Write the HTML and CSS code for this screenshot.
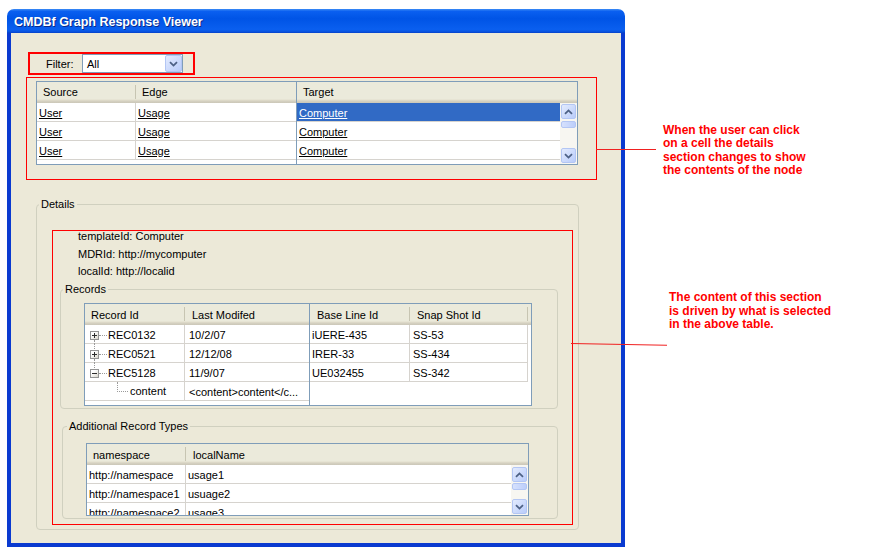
FILE: index.html
```html
<!DOCTYPE html>
<html>
<head>
<meta charset="utf-8">
<title>CMDBf Graph Response Viewer</title>
<link rel="stylesheet" href="styles.css">
</head>
<body>
<div class="window">
  <div class="titlebar"><span class="title">CMDBf Graph Response Viewer</span></div>
  <div class="client">
    <div class="filter-box">
      <span class="filter-label">Filter:</span>
      <div class="combo">
        <span class="combo-text">All</span>
        <span class="combo-btn"><svg width="9" height="6" viewBox="0 0 9 6"><polyline points="1,1.2 4.5,4.6 8,1.2" fill="none" stroke="#4D6185" stroke-width="1.8"/></svg></span>
      </div>
    </div>

    <div class="table-box">
      <div class="grid grid-main">
        <div class="pane pane-left main-left">
          <div class="hdr"><div class="h col-src">Source</div><div class="h col-edge last">Edge</div></div>
          <div class="row"><div class="c col-src"><a>User</a></div><div class="c col-edge last"><a>Usage</a></div></div>
          <div class="row"><div class="c col-src"><a>User</a></div><div class="c col-edge last"><a>Usage</a></div></div>
          <div class="row"><div class="c col-src"><a>User</a></div><div class="c col-edge last"><a>Usage</a></div></div>
        </div>
        <div class="pane pane-right main-right">
          <div class="hdr"><div class="h fill last pad-target">Target</div></div>
          <div class="body">
            <div class="rows">
              <div class="row sel"><div class="c fill last"><a>Computer</a></div></div>
              <div class="row"><div class="c fill last"><a>Computer</a></div></div>
              <div class="row"><div class="c fill last"><a>Computer</a></div></div>
            </div>
            <div class="sb sb-main">
              <div class="sb-btn"><svg width="9" height="6" viewBox="0 0 9 6"><polyline points="1,4.8 4.5,1.4 8,4.8" fill="none" stroke="#4D6185" stroke-width="1.8"/></svg></div>
              <div class="sb-thumb"></div>
              <div class="sb-fill"></div>
              <div class="sb-btn"><svg width="9" height="6" viewBox="0 0 9 6"><polyline points="1,1.2 4.5,4.6 8,1.2" fill="none" stroke="#4D6185" stroke-width="1.8"/></svg></div>
            </div>
          </div>
        </div>
      </div>
    </div>

    <div class="group details">
      <div class="legend">Details</div>
      <div class="detail-box">
        <div class="fields">
          <div>templateId: Computer</div>
          <div>MDRId: http://mycomputer</div>
          <div>localId: http://localid</div>
        </div>

        <div class="group records">
          <div class="legend">Records</div>
          <div class="grid grid-records sub-grid">
            <div class="pane pane-left rec-left">
              <div class="hdr"><div class="h col-rid">Record Id</div><div class="h col-mod last pad7">Last Modifed</div></div>
              <div class="row">
                <div class="c col-rid tree down"><span class="tbox plus"></span><span class="tdot"></span><span class="ttext">REC0132</span></div>
                <div class="c col-mod last pad4">10/2/07</div>
              </div>
              <div class="row">
                <div class="c col-rid tree up down"><span class="tbox plus"></span><span class="tdot"></span><span class="ttext">REC0521</span></div>
                <div class="c col-mod last pad4">12/12/08</div>
              </div>
              <div class="row">
                <div class="c col-rid tree up"><span class="tbox"></span><span class="tdot"></span><span class="ttext">REC5128</span></div>
                <div class="c col-mod last pad4">11/9/07</div>
              </div>
              <div class="row">
                <div class="c col-rid tree child"><span class="tbranch"></span><span class="ttext">content</span></div>
                <div class="c col-mod last pad4">&lt;content&gt;content&lt;/c...</div>
              </div>
            </div>
            <div class="pane pane-right rec-right">
              <div class="hdr"><div class="h col-base pad7">Base Line Id</div><div class="h col-snap pad7">Snap Shot Id</div><div class="h fill last"></div></div>
              <div class="row short"><div class="c col-base">iUERE-435</div><div class="c col-snap pad3">SS-53</div></div>
              <div class="row short"><div class="c col-base">IRER-33</div><div class="c col-snap pad3">SS-434</div></div>
              <div class="row short"><div class="c col-base">UE032455</div><div class="c col-snap pad3">SS-342</div></div>
            </div>
          </div>
        </div>

        <div class="group additional">
          <div class="legend">Additional Record Types</div>
          <div class="grid grid-add sub-grid">
            <div class="pane add-pane">
              <div class="hdr"><div class="h col-ns">namespace</div><div class="h fill last pad7">localName</div></div>
              <div class="body add-body">
                <div class="rows">
                  <div class="row"><div class="c col-ns">http://namespace</div><div class="c fill last">usage1</div></div>
                  <div class="row"><div class="c col-ns">http://namespace1</div><div class="c fill last">usuage2</div></div>
                  <div class="row"><div class="c col-ns">http://namespace2</div><div class="c fill last">usage3</div></div>
                </div>
                <div class="sb sb-add">
                  <div class="sb-btn"><svg width="9" height="6" viewBox="0 0 9 6"><polyline points="1,4.8 4.5,1.4 8,4.8" fill="none" stroke="#4D6185" stroke-width="1.8"/></svg></div>
                  <div class="sb-thumb"></div>
                  <div class="sb-fill"></div>
                  <div class="sb-btn"><svg width="9" height="6" viewBox="0 0 9 6"><polyline points="1,1.2 4.5,4.6 8,1.2" fill="none" stroke="#4D6185" stroke-width="1.8"/></svg></div>
                </div>
              </div>
            </div>
          </div>
        </div>
      </div>
    </div>
  </div>
</div>

<div class="note-line line-1"></div>
<div class="note note-1">When the user can click<br>on a cell the details<br>section changes to show<br>the contents of the node</div>
<div class="note-line line-2"></div>
<div class="note note-2">The content of this section<br>is driven by what is selected<br>in the above table.</div>
</body>
</html>
```

FILE: styles.css
```css
* { box-sizing: border-box; }
html, body { margin: 0; padding: 0; }
body {
  width: 885px;
  height: 558px;
  overflow: hidden;
  position: relative;
  background: #ffffff;
  font-family: "Liberation Sans", Arial, sans-serif;
  font-size: 11px;
  color: #000;
}
a { color: inherit; text-decoration: underline; }

/* window frame */
.window { margin: 9px 0 0 7px; width: 618px; }
.titlebar {
  height: 24px;
  border-radius: 7px 7px 0 0;
  background: linear-gradient(180deg, #3d8cf5 0, #0a5ff0 10%, #0054e6 40%, #0a5fef 85%, #0855e3 93%, #0541c9 100%);
  display: flex;
  align-items: center;
  padding: 1px 0 0 7px;
}
.title {
  color: #fff;
  font-weight: bold;
  font-size: 12.5px;
  text-shadow: 1px 1px 0 #0a2a8a;
}
.client {
  height: 514px;
  background: #ECE9D8;
  border: 4px solid #0a3ad0;
  border-top: 0;
  padding-top: 19px;
}

/* filter */
.filter-box {
  margin-left: 17px;
  width: 167px;
  height: 23px;
  border: 2px solid #ff0000;
  display: flex;
  align-items: center;
  padding-left: 16px;
}
.filter-label { display: inline-block; width: 36px; }
.combo {
  width: 101px;
  height: 19px;
  border: 1px solid #7F9DB9;
  background: #fff;
  display: flex;
  align-items: center;
}
.combo-text { padding-left: 4px; flex: 1; }
.combo-btn {
  width: 17px;
  height: 17px;
  border: 1px solid #B3C6F4;
  border-radius: 2px;
  background: linear-gradient(135deg, #E3EBFE, #B9CCFA);
  display: flex;
  align-items: center;
  justify-content: center;
}

/* table box */
.table-box {
  margin: 2px 0 0 15px;
  width: 571px;
  height: 103px;
  border: 1px solid #ff0000;
  padding: 3px 0 0 9px;
}

/* generic grid */
.grid {
  border: 1px solid #7F9DB9;
  background: #fff;
  display: flex;
  overflow: hidden;
}
.pane { display: flex; flex-direction: column; }
.pane-left { border-right: 1px solid #7F9DB9; }
.pane-right, .add-pane { flex: 1; }
.hdr {
  display: flex;
  height: 21px;
  flex: none;
  background: linear-gradient(180deg, #EBEADB 0, #EBEADB 17px, #E2DECD 18px, #D6D2C2 19px, #CBC7B8 21px);
}
.h {
  position: relative;
  height: 21px;
  line-height: 21px;
  padding-left: 6px;
  white-space: nowrap;
}
.h::after {
  content: "";
  position: absolute;
  right: 0;
  top: 3px;
  bottom: 4px;
  width: 1px;
  background: #C7C5B2;
}
.h.last::after { display: none; }
.row {
  display: flex;
  height: 19px;
  flex: none;
  border-bottom: 1px solid #D6D3CE;
}
.c {
  height: 18px;
  line-height: 20px;
  padding-left: 2px;
  white-space: nowrap;
  overflow: hidden;
  border-right: 1px solid #D6D3CE;
}
.sub-grid .h { line-height: 22px; }
.sub-grid .c { line-height: 21px; }
.c.last { border-right: 0; }
.fill { flex: 1; }
.pad3 { padding-left: 3px; }
.pad4 { padding-left: 4px; }
.pad7 { padding-left: 7px; }
.pad-target { padding-left: 6px; }
.row.sel .c { background: #316AC5; color: #fff; }

.body { display: flex; flex: 1; }
.rows { flex: 1; display: flex; flex-direction: column; overflow: hidden; }

/* scrollbar */
.sb {
  width: 17px;
  flex: none;
  background: #F7F6F1;
  display: flex;
  flex-direction: column;
  padding: 1px 0 1px 1px;
}
.sb-btn {
  width: 15px;
  height: 15px;
  flex: none;
  border: 1px solid #B3C6F4;
  border-radius: 2px;
  background: linear-gradient(135deg, #E3EBFE, #B9CCFA);
  display: flex;
  align-items: center;
  justify-content: center;
}
.sb-thumb {
  width: 15px;
  height: 7px;
  margin-top: 2px;
  flex: none;
  border: 1px solid #B3C6F4;
  border-radius: 2px;
  background: linear-gradient(90deg, #D6E1FD, #BCCEFA);
}
.sb-fill { flex: 1; }

/* main table */
.grid-main { width: 542px; height: 84px; }
.main-left { width: 260px; }
.col-src { width: 99px; }
.col-edge { width: 160px; }

/* group boxes */
.group {
  border: 1px solid #D0D0BF;
  border-radius: 4px;
}
.legend {
  width: max-content;
  margin-top: -7px;
  margin-left: 2px;
  padding: 0 2px;
  line-height: 13px;
  height: 13px;
  background: #ECE9D8;
}
.details {
  margin: 24px 0 0 25px;
  width: 543px;
  padding-bottom: 4px;
}
.detail-box {
  margin: 19px 0 0 15px;
  width: 521px;
  height: 295px;
  border: 1px solid #ff0000;
}
.fields {
  margin-top: -3px;
  padding-left: 25px;
  line-height: 17.5px;
  height: 51px;
}

.records {
  margin: 10px 0 0 7px;
  width: 498px;
  height: 120px;
}
.grid-records {
  margin: 7px 0 0 23px;
  width: 448px;
  height: 103px;
}
.rec-left { width: 225px; }
.col-rid { width: 100px; }
.col-mod { width: 124px; }
.col-base { width: 100px; }
.col-snap { width: 118px; }
.row.short .c { border-right: 1px solid #D6D3CE; }
.rec-right .row { width: 218px; }

/* tree */
.tree {
  position: relative;
  overflow: visible;
  display: flex;
  align-items: center;
  padding-left: 5px;
  padding-top: 2px;
}
.tree.up::before {
  content: "";
  position: absolute;
  left: 9px;
  top: 0;
  height: 5px;
  border-left: 1px dotted #9a9a9a;
}
.tree.down::after {
  content: "";
  position: absolute;
  left: 9px;
  top: 15px;
  bottom: -1px;
  border-left: 1px dotted #9a9a9a;
}
.tbox {
  position: relative;
  width: 9px;
  height: 9px;
  flex: none;
  border: 1px solid #949494;
  background: linear-gradient(135deg, #ffffff 30%, #d9d6cc);
}
.tbox::before {
  content: "";
  position: absolute;
  left: 1px;
  top: 3px;
  width: 5px;
  height: 1px;
  background: #2c2c2c;
}
.tbox.plus::after {
  content: "";
  position: absolute;
  left: 3px;
  top: 1px;
  width: 1px;
  height: 5px;
  background: #2c2c2c;
}
.tdot {
  width: 8px;
  flex: none;
  border-top: 1px dotted #9a9a9a;
}
.ttext { margin-left: 1px; }
.tree.child { padding-top: 0; }
.tbranch {
  align-self: flex-start;
  margin-left: 27px;
  width: 11px;
  height: 10px;
  flex: none;
  border-left: 1px dotted #9a9a9a;
  border-bottom: 1px dotted #9a9a9a;
}
.tbranch + .ttext { margin-left: 2px; }

.additional {
  margin: 17px 0 0 9px;
  width: 496px;
  height: 93px;
}
.additional .legend { margin-left: 4px; }
.grid-add {
  margin: 10px 0 0 23px;
  width: 443px;
  height: 73px;
}
.col-ns { width: 99px; }
.add-body { height: 50px; flex: none; }
.sb-add { padding-top: 2px; padding-bottom: 1px; }
.sb-add .sb-thumb { margin-top: 1px; }

/* annotations */
.note {
  position: absolute;
  color: #ff0000;
  font-weight: bold;
  font-size: 12px;
  white-space: nowrap;
}
.note-1 { left: 663px; top: 124px; line-height: 13.3px; }
.note-2 { left: 669px; top: 291px; line-height: 13.5px; }
.note-line {
  position: absolute;
  height: 1px;
  background: #f02020;
}
.line-1 { left: 596px; top: 149px; width: 60px; }
.line-2 { left: 571px; top: 343px; width: 96px; transform: rotate(1deg); transform-origin: left center; }
```
